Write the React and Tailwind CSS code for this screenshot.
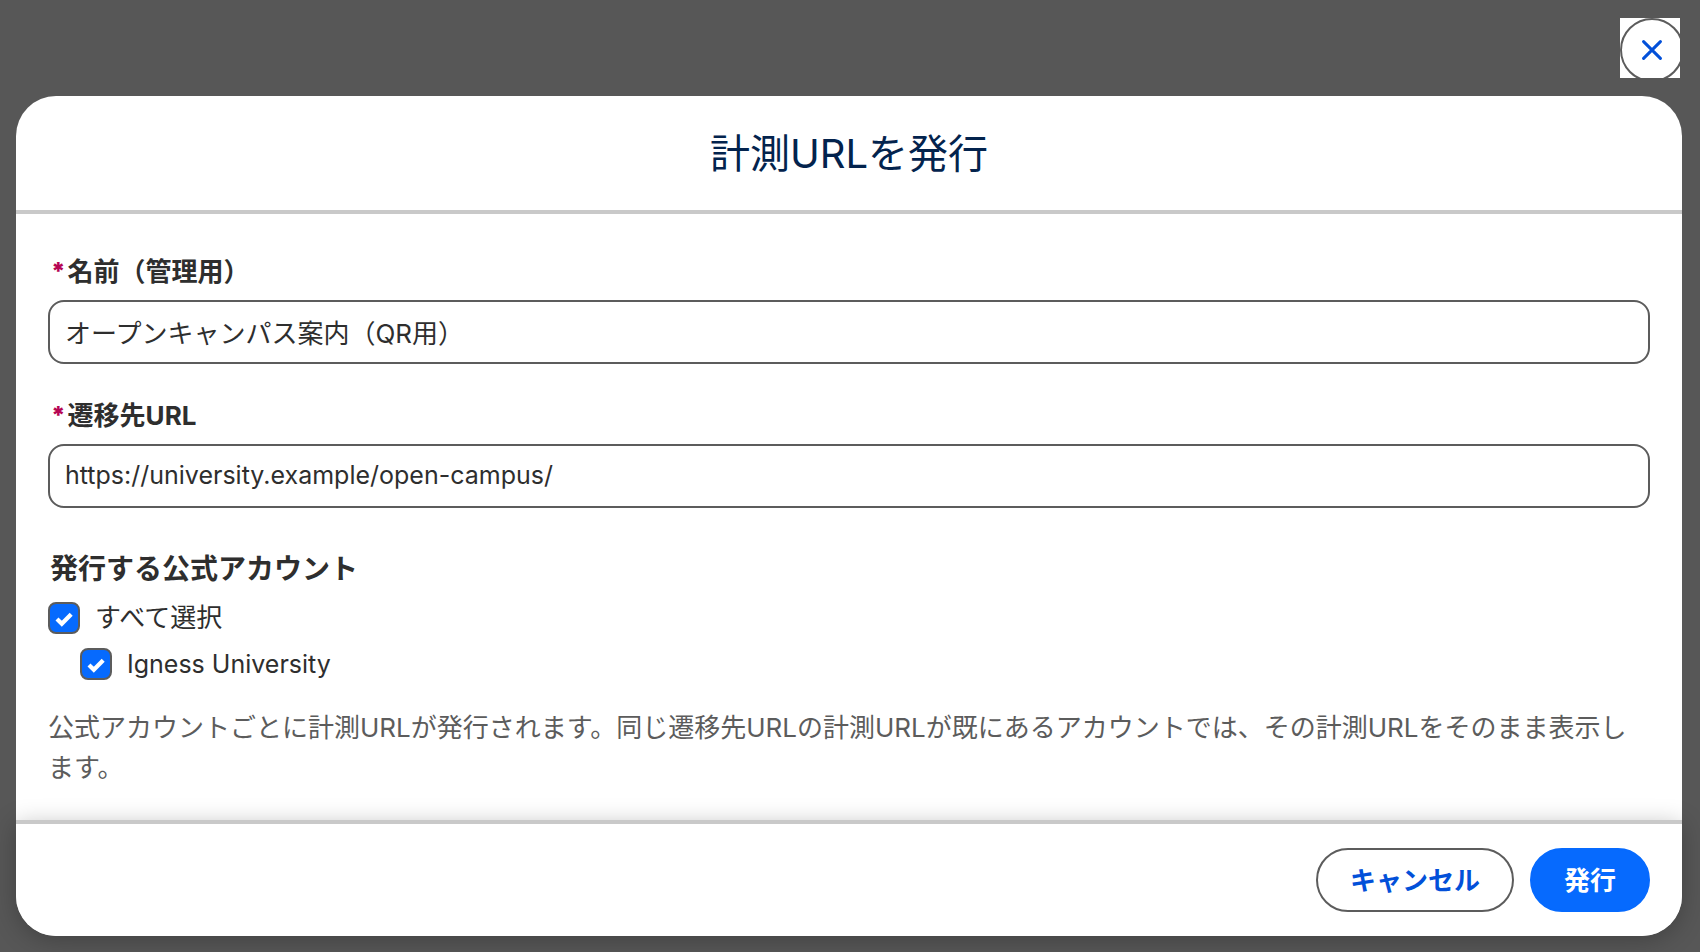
import React, { useState } from "react";

const Checkbox = ({ id, label, checked, onChange, className = "text-[26px]" }) => (
    <div className="flex items-center gap-[15px]">
        <span className="relative flex h-8 w-8 shrink-0">
            <input
                id={id}
                type="checkbox"
                checked={checked}
                onChange={onChange}
                className="peer h-8 w-8 appearance-none rounded-lg border-2 border-[#5c5c5c] bg-white checked:bg-[#066afe]"
            />
            <svg viewBox="0 0 32 32" className="pointer-events-none absolute inset-0 hidden h-8 w-8 peer-checked:block" fill="none" stroke="#fff" strokeWidth="4.2">
                <path d="M9 17l4.8 4.8L23.2 12.2" />
            </svg>
        </span>
        <label htmlFor={id} className={`leading-8 ${className}`}>{label}</label>
    </div>
);

const TextField = ({ id, type = "text", label, value, onChange, className = "text-[26px]" }) => (
    <div className="flex flex-col gap-2">
        <label htmlFor={id} className="flex gap-[2px] pl-[3px] text-[26px] font-bold leading-10">
            <span className="text-2xl leading-10 font-black text-[#b60554]">*</span>
            {label}
        </label>
        <input
            id={id}
            type={type}
            name={id}
            value={value}
            onChange={onChange}
            required
            autoComplete="off"
            className={`h-16 w-full rounded-2xl border-2 border-[#5c5c5c] bg-white px-[15px] pb-[2px] ${className}`}
        />
    </div>
);

const App = () => {
    const [form, setForm] = useState({
        nombre: "オープンキャンパス案内（QR用）",
        url: "https://university.example/open-campus/",
    });
    const [accounts, setAccounts] = useState([{ id: "igness", name: "Igness University", checked: true }]);

    const allChecked = accounts.every((a) => a.checked);

    const handleChange = (e) => {
        setForm({ ...form, [e.target.name]: e.target.value });
    };

    const toggleAll = () => {
        setAccounts(accounts.map((a) => ({ ...a, checked: !allChecked })));
    };

    const toggleAccount = (id) => {
        setAccounts(accounts.map((a) => (a.id === id ? { ...a, checked: !a.checked } : a)));
    };

    const handleSubmit = (e) => {
        e.preventDefault();
    };

    return (
        <main className="flex min-h-screen flex-col gap-[18px] bg-[#575757] pt-[18px] pr-[18px] pb-4 pl-4 font-[Inter,'Noto_Sans_CJK_JP',sans-serif] text-[#2e2e2e]">
            <div className="mr-[2px] h-[60px] w-[60px] self-end overflow-hidden bg-white">
                <button type="button" aria-label="閉じる" className="flex h-16 w-16 items-center justify-center rounded-full border-2 border-[#5c5c5c] bg-white">
                    <svg viewBox="0 0 20 20" className="h-5 w-5" fill="none" stroke="#0250d9" strokeWidth="3" strokeLinecap="round">
                        <path d="M1.6 1.6l16.8 16.8M18.4 1.6L1.6 18.4" />
                    </svg>
                </button>
            </div>

            <form onSubmit={handleSubmit} role="dialog" aria-labelledby="title" className="flex grow flex-col rounded-[40px] bg-white">
                <header className="border-b-4 border-[#c9c9c9] px-8 pt-[33px] pb-[31px]">
                    <h1 id="title" className="text-center text-[40px] leading-[50px] text-[#03234d]">計測URLを発行</h1>
                </header>

                <div className="flex grow flex-col px-8 pt-[38px] pb-8">
                    <div className="flex flex-col gap-8">
                        <TextField id="nombre" label="名前（管理用）" value={form.nombre} onChange={handleChange} />
                        <TextField id="url" type="url" label="遷移先URL" value={form.url} onChange={handleChange} className="text-[25px]" />
                    </div>

                    <fieldset className="mt-10">
                        <legend className="pl-[2px] text-[28px] font-bold leading-[42px]">発行する公式アカウント</legend>
                        <div className="flex flex-col gap-[14px] pt-3">
                            <Checkbox id="all" label="すべて選択" checked={allChecked} onChange={toggleAll} />
                            {accounts.map((a) => (
                                <div key={a.id} className="pl-8">
                                    <Checkbox id={a.id} label={a.name} checked={a.checked} onChange={() => toggleAccount(a.id)} className="text-[25px]" />
                                </div>
                            ))}
                        </div>
                    </fieldset>

                    <p className="mt-7 text-[26px] leading-10 text-[#5c5c5c]">
                        公式アカウントごとに計測URLが発行されます。同じ遷移先URLの計測URLが既にあるアカウントでは、その計測URLをそのまま表示します。
                    </p>
                </div>

                <footer className="flex justify-end gap-4 rounded-b-[40px] border-t-4 border-[#c9c9c9] bg-white px-8 py-6 shadow-[0_4px_24px_rgba(0,0,0,0.25)]">
                    <button type="button" className="h-16 rounded-full border-2 border-[#5c5c5c] px-8 text-[26px] font-bold text-[#0250d9]">キャンセル</button>
                    <button type="submit" className="h-16 rounded-full border-2 border-[#066afe] bg-[#066afe] px-8 text-[26px] font-bold text-white">発行</button>
                </footer>
            </form>
        </main>
    );
};

export default App;
